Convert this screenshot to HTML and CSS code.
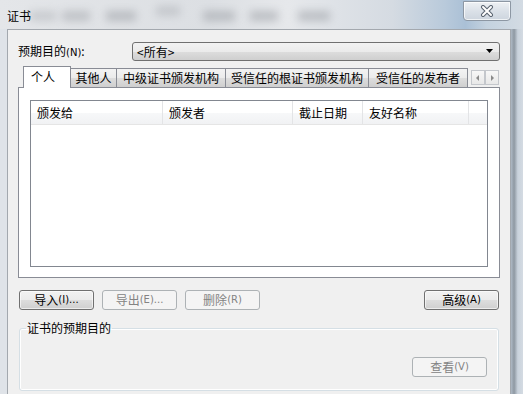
FILE: index.html
```html
<!DOCTYPE html>
<html>
<head>
<meta charset="utf-8">
<link rel="stylesheet" href="styles.css">
</head>
<body>
<div class="window">
  <div class="titlebar">
    <span class="title">证书</span>
    <div class="blur b1"></div><div class="blur b2"></div><div class="blur b3"></div><div class="blur b4"></div><div class="blur b5"></div><div class="blur b6"></div><div class="blur b7"></div>
    <div class="close">
      <svg width="18" height="12" viewBox="0 0 18 12">
        <path d="M5 2 L13 10 M13 2 L5 10" stroke="#5a6470" stroke-width="4" stroke-linecap="round"/>
        <path d="M5 2 L13 10 M13 2 L5 10" stroke="#ffffff" stroke-width="2" stroke-linecap="round"/>
      </svg>
    </div>
  </div>
  <div class="client">
    <div class="purpose">
      <span class="plabel">预期目的<span class="acc">(N)</span>:</span>
      <div class="combo">
        <span>&lt;所有&gt;</span>
        <svg width="8" height="5" viewBox="0 0 8 5"><path d="M0 0 H7 L3.5 4 Z" fill="#000"/></svg>
      </div>
    </div>
    <div class="tabs">
      <div class="tab sel w1">个人</div>
      <div class="tab w2">其他人</div>
      <div class="tab w3">中级证书颁发机构</div>
      <div class="tab w4">受信任的根证书颁发机构</div>
      <div class="tab w5">受信任的发布者</div>
      <div class="scroll">
        <div class="sbtn"><svg width="4" height="6" viewBox="0 0 4 6"><path d="M3 0 V6 L0 3 Z" fill="#8a8a8a"/></svg></div>
        <div class="sbtn"><svg width="4" height="6" viewBox="0 0 4 6"><path d="M1 0 V6 L4 3 Z" fill="#8a8a8a"/></svg></div>
      </div>
    </div>
    <div class="panel">
      <div class="list">
        <div class="header">
          <div class="col c1">颁发给</div>
          <div class="col c2">颁发者</div>
          <div class="col c3">截止日期</div>
          <div class="col c4">友好名称</div>
          <div class="col c5"></div>
        </div>
      </div>
    </div>
    <div class="buttons">
      <button class="btn">导入<span class="acc">(I)...</span></button>
      <button class="btn dis">导出<span class="acc">(E)...</span></button>
      <button class="btn dis">删除<span class="acc">(R)</span></button>
      <button class="btn right">高级<span class="acc">(A)</span></button>
    </div>
    <fieldset class="group">
      <legend class="legend">证书的预期目的</legend>
      <div class="group-body">
        <button class="btn dis">查看<span class="acc">(V)</span></button>
      </div>
    </fieldset>
  </div>
</div>
</body>
</html>
```
FILE: styles.css
```css
* { box-sizing: border-box; }
html, body { margin: 0; padding: 0; }
body {
  font-family: "Noto Sans CJK SC", "DejaVu Sans", sans-serif;
  font-size: 12px;
  color: #000;
  background: #d9dee4;
}
.window {
  width: 523px;
  height: 394px;
  overflow: hidden;
  background: linear-gradient(90deg, #dfe3e8 0%, #dfe3e8 95%, #b9c4d0 97.5%, #8e98a2 98.3%, #c9d2dc 99%, #d4dbe2 100%);
  padding: 0 12px 0 7px;
}
.titlebar {
  height: 29px;
  margin: 0 -12px 0 -7px;
  padding-left: 7px;
  display: flex;
  align-items: center;
  position: relative;
  overflow: hidden;
  background: linear-gradient(90deg, #e4e6e9 0%, #dcdfe3 40%, #e6e8eb 55%, #d5dbe2 75%, #b9cadb 85%, #aac0d6 89%, #c4d2df 93%, #d3dbe3 100%);
}
.title { position: relative; z-index: 2; font-size: 12px; margin-top: 2px; }
.blur {
  position: absolute;
  top: 11px;
  height: 10px;
  background: #8c9096;
  filter: blur(4px);
  opacity: 0.45;
}
.b1 { left: 30px; width: 26px; opacity: 0.3; }
.b2 { left: 62px; width: 28px; opacity: 0.4; }
.b3 { left: 106px; width: 30px; }
.b4 { left: 156px; width: 24px; top: 6px; opacity: 0.3; }
.b5 { left: 203px; width: 32px; }
.b6 { left: 250px; width: 28px; }
.b7 { left: 298px; width: 32px; }
.close {
  position: absolute;
  left: 463px;
  top: 1px;
  width: 48px;
  height: 20px;
  border: 1px solid #8d97a3;
  border-radius: 0 0 4px 4px;
  background: linear-gradient(#eef1f4, #dbe1e8 50%, #cdd5de);
  box-shadow: inset 0 0 0 1px rgba(255,255,255,0.7);
  display: flex;
  align-items: center;
  justify-content: center;
  z-index: 2;
}
.client {
  height: 365px;
  background: #f0f0f0;
  border: 1px solid #a3a8ae;
  border-bottom: none;
  padding: 12px 10px 0 10px;
  display: flex;
  flex-direction: column;
}
.purpose {
  display: flex;
  align-items: center;
  height: 19px;
}
.plabel { width: 114px; line-height: 14px; }
.acc { font-family: "DejaVu Sans", sans-serif; font-size: 10px; letter-spacing: 0; }
.combo {
  flex: 1;
  height: 19px;
  border: 1px solid #707070;
  border-radius: 3px;
  background: linear-gradient(#f2f2f2, #ebebeb 50%, #dddddd 51%, #cfcfcf);
  display: flex;
  align-items: center;
  justify-content: space-between;
  padding: 0 5px 0 4px;
}
.combo span { line-height: 14px; }
.tabs {
  margin-top: 5px;
  height: 21px;
  display: flex;
  align-items: flex-start;
  padding-left: 5px;
  position: relative;
  z-index: 2;
}
.tab {
  height: 19px;
  margin-top: 2px;
  margin-left: -1px;
  border: 1px solid #898c95;
  border-bottom: none;
  background: linear-gradient(#f3f3f3, #ebebeb 50%, #dddddd 51%, #cfcfcf);
  display: flex;
  align-items: center;
  justify-content: center;
  line-height: 14px;
  white-space: nowrap;
}
.tab.sel {
  margin-top: 0;
  height: 22px;
  margin-left: 0;
  background: #ffffff;
  position: relative;
  z-index: 3;
  padding-bottom: 2px;
  justify-content: flex-start;
  padding-left: 7px;
}
.w1 { width: 48px; }
.w2 { width: 47px; margin-left: -1px; }
.w3 { width: 110px; }
.w4 { width: 144px; }
.w5 { width: 100px; }
.scroll {
  display: flex;
  margin-left: 3px;
  margin-top: 4px;
}
.sbtn {
  width: 14px;
  height: 15px;
  border: 1px solid #c4c7cc;
  background: linear-gradient(#f7f7f7, #e8e8e8);
  display: flex;
  align-items: center;
  justify-content: center;
}
.panel {
  height: 191px;
  border: 1px solid #898c95;
  background: #ffffff;
  padding: 12px 11px 10px 11px;
  position: relative;
  z-index: 1;
}
.list {
  height: 167px;
  border: 1px solid #828790;
  background: #ffffff;
}
.header {
  height: 24px;
  display: flex;
  background: linear-gradient(#ffffff, #ffffff 50%, #f7f8f9 51%, #f1f2f4);
  border-bottom: 1px solid #e5e5e5;
}
.col {
  border-right: 1px solid #e3e4e6;
  padding-left: 6px;
  display: flex;
  align-items: center;
  line-height: 14px;
}
.c1 { width: 132px; }
.c2 { width: 130px; }
.c3 { width: 70px; }
.c4 { width: 106px; }
.c5 { width: 18px; border-right: none; }
.buttons {
  margin-top: 12px;
  display: flex;
  padding: 0 1px;
  gap: 8px;
}
.btn {
  width: 75px;
  height: 20px;
  border: 1px solid #707070;
  border-radius: 3px;
  background: linear-gradient(#f2f2f2, #ebebeb 50%, #dddddd 51%, #cfcfcf);
  box-shadow: inset 0 0 0 1px rgba(255,255,255,0.6);
  font-family: "Noto Sans CJK SC", sans-serif;
  font-size: 12px;
  color: #000;
  padding: 0;
  margin: 0;
  line-height: 14px;
  display: flex;
  align-items: center;
  justify-content: center;
}
.btn.dis {
  border-color: #adb2b5;
  background: #f4f4f4;
  box-shadow: none;
  color: #838383;
}
.btn.right { margin-left: auto; }
.group {
  margin: 11px 1px 0 1px;
  padding: 0 11px 0 8px;
  border: 1px solid #d5dfe5;
  border-radius: 3px;
  box-shadow: inset 0 0 0 1px #ffffff;
  height: 70px;
  min-width: 0;
}
.legend {
  padding: 0 1px;
  margin-left: -2px;
  line-height: 14px;
}
.group-body {
  display: flex;
  justify-content: flex-end;
  padding-top: 22px;
}
```
